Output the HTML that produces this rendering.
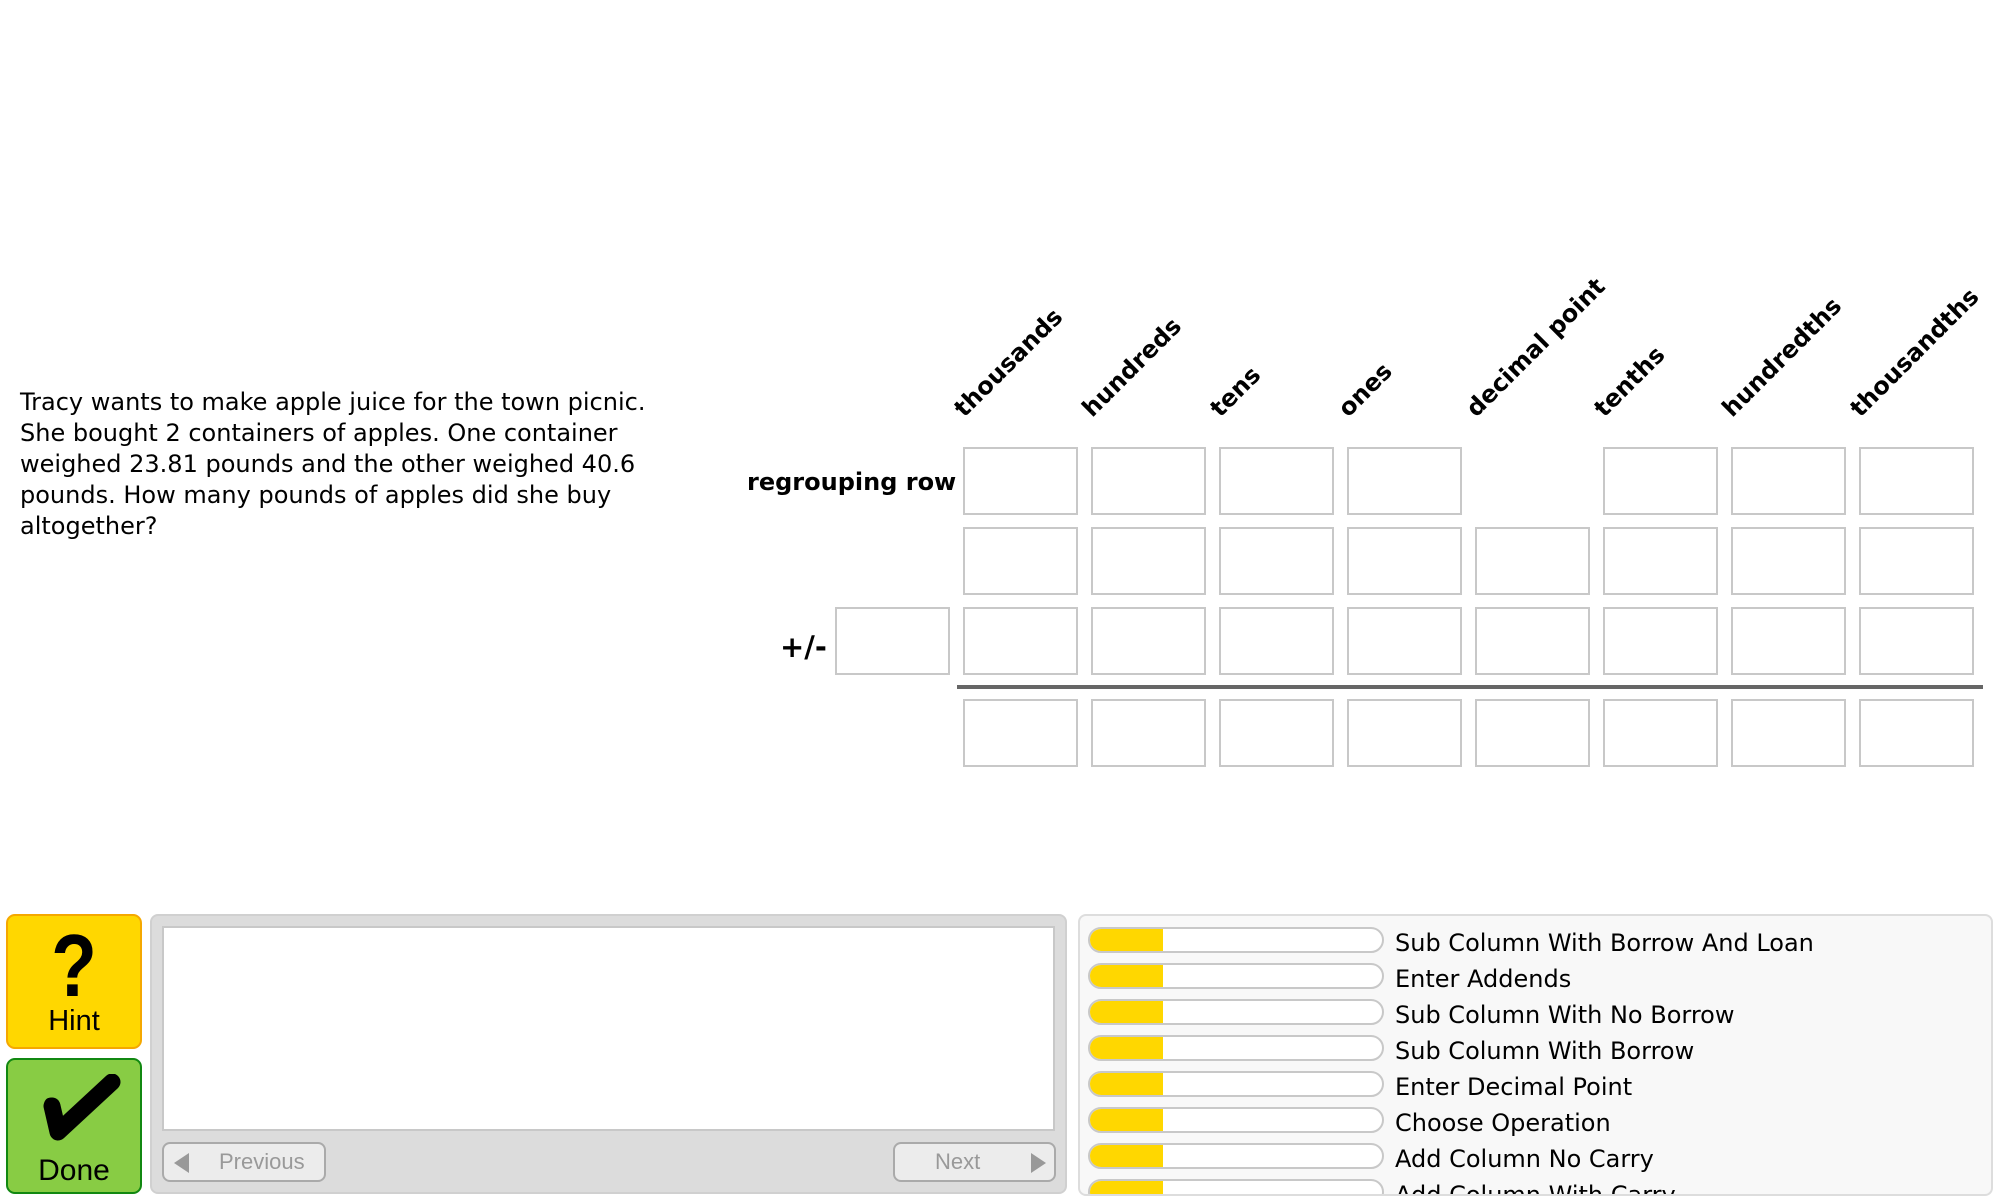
<!DOCTYPE html>
<html><head><meta charset="utf-8"><style>
*{margin:0;padding:0;box-sizing:border-box}
body{width:2000px;height:1200px;background:#fff;position:relative;overflow:hidden;font-family:"DejaVu Sans","Liberation Sans",sans-serif;color:#000}
.a{position:absolute}
.box{position:absolute;width:115px;height:68px;border:2px solid #c8c8c8;background:#fff}
.hd{position:absolute;font-weight:bold;font-size:24px;line-height:24px;white-space:nowrap;transform-origin:0 100%;transform:rotate(-45deg)}
.q{font-size:24px;line-height:31px}
.bar{position:absolute;left:1088px;width:296px;height:26px;border:2px solid #c8c8c8;border-radius:13px;background:#fff;overflow:hidden}
.bar i{position:absolute;left:0;top:0;bottom:0;width:73px;background:#ffd700}
.lb{position:absolute;left:1395px;font-size:24px;line-height:26px;white-space:nowrap}
</style></head><body>
<div class="a q" style="left:20px;top:387px">Tracy wants to make apple juice for the town picnic.<br>She bought 2 containers of apples. One container<br>weighed 23.81 pounds and the other weighed 40.6<br>pounds. How many pounds of apples did she buy<br>altogether?</div>

<div class="hd" style="left:967px;top:397px">thousands</div>
<div class="hd" style="left:1095px;top:397px">hundreds</div>
<div class="hd" style="left:1223px;top:397px">tens</div>
<div class="hd" style="left:1351px;top:397px">ones</div>
<div class="hd" style="left:1479px;top:397px">decimal point</div>
<div class="hd" style="left:1607px;top:397px">tenths</div>
<div class="hd" style="left:1735px;top:397px">hundredths</div>
<div class="hd" style="left:1863px;top:397px">thousandths</div>

<div class="a" style="left:747px;top:467px;font-weight:bold;font-size:24px;line-height:30px">regrouping row</div>
<div class="a" style="left:780px;top:632px;font-weight:bold;font-size:29px;line-height:30px">+/-</div>

<div class="box" style="left:963px;top:447px"></div><div class="box" style="left:1091px;top:447px"></div><div class="box" style="left:1219px;top:447px"></div><div class="box" style="left:1347px;top:447px"></div><div class="box" style="left:1603px;top:447px"></div><div class="box" style="left:1731px;top:447px"></div><div class="box" style="left:1859px;top:447px"></div>

<div class="box" style="left:963px;top:527px"></div><div class="box" style="left:1091px;top:527px"></div><div class="box" style="left:1219px;top:527px"></div><div class="box" style="left:1347px;top:527px"></div><div class="box" style="left:1475px;top:527px"></div><div class="box" style="left:1603px;top:527px"></div><div class="box" style="left:1731px;top:527px"></div><div class="box" style="left:1859px;top:527px"></div>

<div class="box" style="left:835px;top:607px"></div>
<div class="box" style="left:963px;top:607px"></div><div class="box" style="left:1091px;top:607px"></div><div class="box" style="left:1219px;top:607px"></div><div class="box" style="left:1347px;top:607px"></div><div class="box" style="left:1475px;top:607px"></div><div class="box" style="left:1603px;top:607px"></div><div class="box" style="left:1731px;top:607px"></div><div class="box" style="left:1859px;top:607px"></div>

<div class="a" style="left:957px;top:685px;width:1026px;height:4px;background:#666"></div>

<div class="box" style="left:963px;top:699px"></div><div class="box" style="left:1091px;top:699px"></div><div class="box" style="left:1219px;top:699px"></div><div class="box" style="left:1347px;top:699px"></div><div class="box" style="left:1475px;top:699px"></div><div class="box" style="left:1603px;top:699px"></div><div class="box" style="left:1731px;top:699px"></div><div class="box" style="left:1859px;top:699px"></div>

<!-- Hint -->
<div class="a" style="left:6px;top:914px;width:136px;height:135px;background:#ffd700;border:2px solid #f5a800;border-radius:9px;text-align:center;font-family:'Liberation Sans',sans-serif">
<div style="font-size:88px;font-weight:bold;line-height:88px;margin-top:6px;height:84px;transform:scaleX(0.85)">?</div>
<div style="font-size:29px;line-height:30px;margin-top:0px">Hint</div>
</div>
<!-- Done -->
<div class="a" style="left:6px;top:1058px;width:136px;height:136px;background:#88cc44;border:2px solid #118811;border-radius:9px;text-align:center;font-family:'Liberation Sans',sans-serif">
<svg class="a" style="left:30px;top:14px" width="84" height="72" viewBox="0 0 84 72"><path d="M14 32 L20 58 L74 8" fill="none" stroke="#000" stroke-width="17" stroke-linecap="round" stroke-linejoin="round"/><path d="M6 32 Q6 22 16 24 Q22 26 22 36 L26 56 L14 62 Z" fill="#000"/></svg>
<div style="position:absolute;left:0;right:0;top:95px;font-size:30px;line-height:32px">Done</div>
</div>

<!-- center panel -->
<div class="a" style="left:150px;top:914px;width:917px;height:280px;background:#dcdcdc;border:2px solid #d0d0d0;border-radius:8px"></div>
<div class="a" style="left:162px;top:926px;width:893px;height:205px;background:#fff;border:2px solid #c8c8c8"></div>
<div class="a" style="left:162px;top:1142px;width:164px;height:40px;background:#ececec;border:2px solid #aaa;border-radius:8px;font-family:'Liberation Sans',sans-serif;font-size:22px;color:#999;line-height:36px">
<svg class="a" style="left:10px;top:9px" width="16" height="20"><path d="M15 0 L0 10 L15 20Z" fill="#999"/></svg>
<span class="a" style="left:55px">Previous</span></div>
<div class="a" style="left:893px;top:1142px;width:163px;height:40px;background:#ececec;border:2px solid #aaa;border-radius:8px;font-family:'Liberation Sans',sans-serif;font-size:22px;color:#999;line-height:36px">
<span class="a" style="left:40px">Next</span>
<svg class="a" style="left:136px;top:9px" width="16" height="20"><path d="M0 0 L15 10 L0 20Z" fill="#999"/></svg></div>

<!-- right panel -->
<div class="a" style="left:1078px;top:914px;width:915px;height:282px;background:#f8f8f8;border:2px solid #ddd;border-radius:8px;overflow:hidden">
<div style="position:relative;left:-1080px;top:-916px;width:2000px;height:1200px">
<div class="bar" style="top:927px"><i></i></div><div class="lb" style="top:930px">Sub Column With Borrow And Loan</div>
<div class="bar" style="top:963px"><i></i></div><div class="lb" style="top:966px">Enter Addends</div>
<div class="bar" style="top:999px"><i></i></div><div class="lb" style="top:1002px">Sub Column With No Borrow</div>
<div class="bar" style="top:1035px"><i></i></div><div class="lb" style="top:1038px">Sub Column With Borrow</div>
<div class="bar" style="top:1071px"><i></i></div><div class="lb" style="top:1074px">Enter Decimal Point</div>
<div class="bar" style="top:1107px"><i></i></div><div class="lb" style="top:1110px">Choose Operation</div>
<div class="bar" style="top:1143px"><i></i></div><div class="lb" style="top:1146px">Add Column No Carry</div>
<div class="bar" style="top:1179px"><i></i></div><div class="lb" style="top:1182px">Add Column With Carry</div>
</div></div>
</body></html>
